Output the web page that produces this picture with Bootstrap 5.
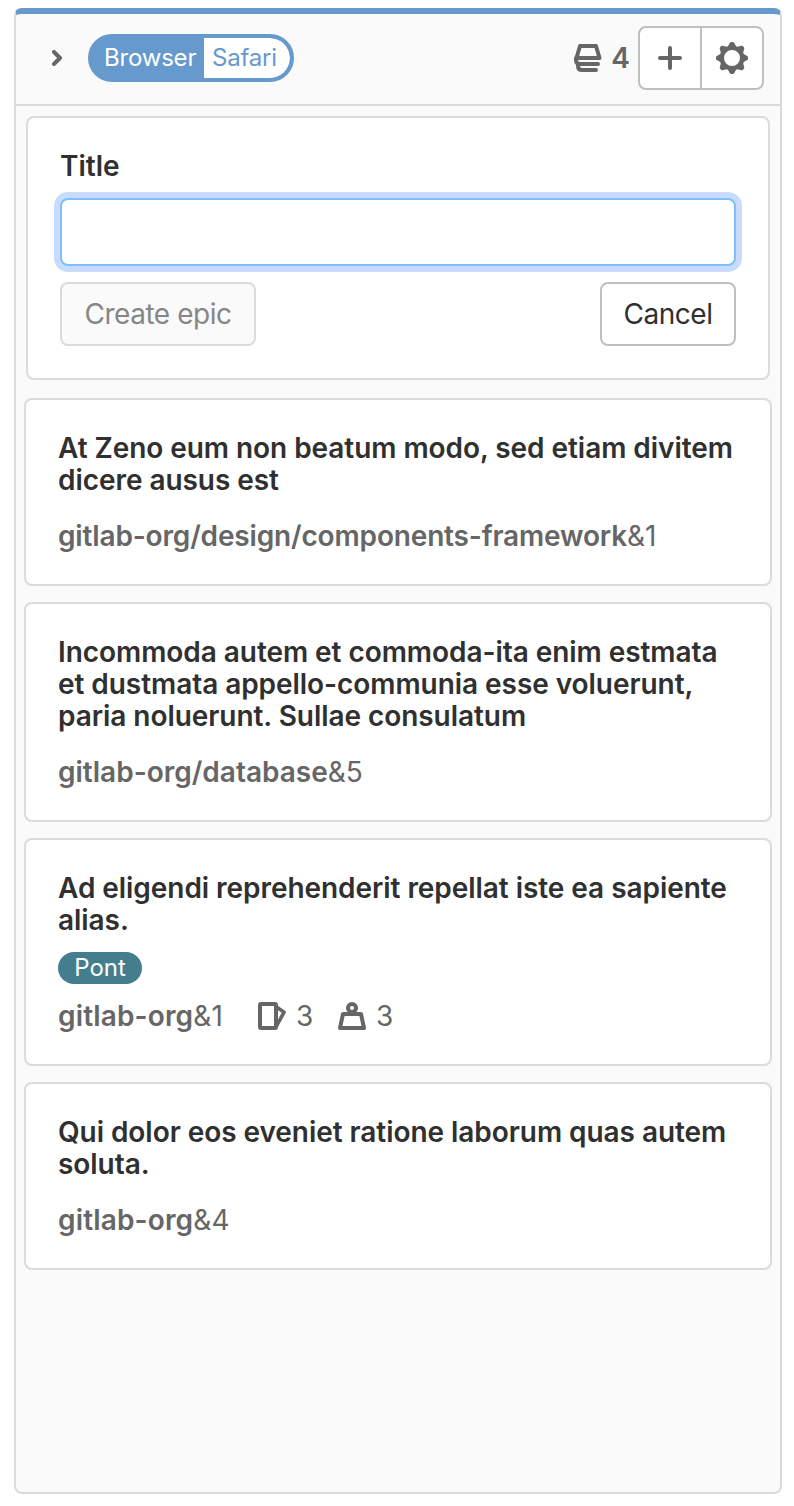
<!DOCTYPE html>
<html lang="en">
<head>
<meta charset="utf-8">
<meta name="viewport" content="width=device-width, initial-scale=1">
<title>Epic board</title>
<link href="https://cdn.jsdelivr.net/npm/bootstrap@5.3.0/dist/css/bootstrap.min.css" rel="stylesheet">
<style>
  body { font-family: Inter, "Liberation Sans", sans-serif; font-size: 28px; line-height: 32px; color: #303030; background: #fff; height: 1506px; overflow: hidden; }
  .board-list { margin: 8px 12px 0 14px; height: 1486px; background: #fafafa; border: 2px solid #dbdbdb; border-top: 6px solid #69c; border-radius: 8px; }
  .list-head { height: 92px; padding: 12px 16px 14px 36px; border-bottom: 2px solid #dbdbdb; }
  .scoped { height: 48px; margin-left: 26px; background: #69c; border: 4px solid #69c; border-radius: 24px; font-size: 24px; line-height: 40px; letter-spacing: -.2px; overflow: hidden; }
  .scoped-key { width: 112px; padding-left: 12px; color: #fff; }
  .scoped-value { width: 86px; padding-left: 8px; color: #69c; background: #fff; border-radius: 0 20px 20px 0; }
  .muted-ink { color: #666; }
  .semi { font-weight: 600; }
  .count { margin: 0 8px 0 9px; }
  .tool-btn { height: 64px; padding: 0; background: #fff; border: 2px solid #bfbfbf; }
  .tool-group .tool-btn { flex: none; }
  .tool-group .tool-btn:first-child { width: 64px; border-radius: 8px 0 0 8px; }
  .tool-group .tool-btn:last-child { width: 64px; margin-left: -2px; border-radius: 0 8px 8px 0; }
  .epic-card, .form-box { background: #fff; border: 2px solid #dbdbdb; border-radius: 8px; }
  .form-box { margin: 10px 10px 18px; height: 264px; padding: 32px; }
  .epic-card { margin: 0 8px 16px; padding: 32px 0 32px 32px; }
  .epic-title { font-weight: 600; letter-spacing: -.055px; }
  .title-field { height: 68px; border: 2px solid #80bdff; border-radius: 8px; }
  .title-field, .title-field:focus { border-color: #80bdff; box-shadow: 0 0 0 6px #c8dcff; }
  .form-btn { height: 64px; font-size: 28px; line-height: 32px; letter-spacing: -.45px; padding: 0; border: 2px solid #bfbfbf; border-radius: 8px; background: #fff; color: #303030; }
  .form-btn:disabled { background: #fafafa; border-color: #dbdbdb; color: #868686; opacity: 1; }
  .w-create { width: 196px; } .w-cancel { width: 136px; }
  .label-pill { width: 84px; height: 32px; margin-top: 16px; border-radius: 16px; background: #447d8e; color: #fff; font-size: 24px; line-height: 32px; text-align: center; }
  .epic-ref { margin-top: 24px; }
  .ref-short { letter-spacing: .15px; }
  .ref-long { letter-spacing: -.16px; }
  .ref-slot { width: 200px; }
  .stat { padding-left: 10px; }
  .stat-slot { width: 52px; }
  .label-pill + .epic-ref { margin-top: 16px; }
  svg { display: block; flex: none; }
</style>
</head>
<body>
<main class="board-list">
  <header class="list-head d-flex align-items-center">
    <svg width="10" height="16" viewBox="0 0 10 16" fill="none" stroke="#666" stroke-width="4" stroke-linecap="round" stroke-linejoin="round"><path d="M2 2l6 6-6 6"/></svg>
    <div class="scoped d-flex"><span class="scoped-key">Browser</span><span class="scoped-value">Safari</span></div>
    <div class="d-flex align-items-center ms-auto muted-ink">
      <svg width="28" height="28" viewBox="0 0 28 28" fill="none" stroke="#666" stroke-width="4" stroke-linecap="round" stroke-linejoin="round"><path d="M6 2h16l3.5 12H2.5zM2 14v2q0 4 4 4h18M4 20v2q0 4 4 4h14"/></svg>
      <span class="semi count">4</span>
      <div class="tool-group d-flex">
        <button class="btn tool-btn d-flex align-items-center justify-content-center" aria-label="New epic"><svg width="24" height="24" viewBox="0 0 24 24" stroke="#666" stroke-width="4" stroke-linecap="round"><path d="M12 2v20M2 12h20"/></svg></button>
        <button class="btn tool-btn d-flex align-items-center justify-content-center" aria-label="Settings"><svg width="32" height="32" viewBox="-16 -16 32 32"><circle r="10.2" fill="none" stroke="#666" stroke-width="4.4"/><g fill="#666" stroke="#666" stroke-width="3" stroke-linejoin="round"><path d="M-2.8-11L-.8-14.5H.8L2.8-11Z"/><path transform="rotate(45)" d="M-2.8-11L-.8-14.5H.8L2.8-11Z"/><path transform="rotate(90)" d="M-2.8-11L-.8-14.5H.8L2.8-11Z"/><path transform="rotate(135)" d="M-2.8-11L-.8-14.5H.8L2.8-11Z"/><path transform="rotate(180)" d="M-2.8-11L-.8-14.5H.8L2.8-11Z"/><path transform="rotate(225)" d="M-2.8-11L-.8-14.5H.8L2.8-11Z"/><path transform="rotate(270)" d="M-2.8-11L-.8-14.5H.8L2.8-11Z"/><path transform="rotate(315)" d="M-2.8-11L-.8-14.5H.8L2.8-11Z"/></g></svg></button>
      </div>
    </div>
  </header>
  <form class="form-box">
    <label for="title" class="semi d-block">Title</label>
    <input id="title" type="text" class="form-control title-field mt-3">
    <div class="d-flex justify-content-between mt-3">
      <button type="button" class="btn form-btn w-create" disabled>Create epic</button>
      <button type="button" class="btn form-btn w-cancel">Cancel</button>
    </div>
  </form>
  <article class="epic-card">
    <div class="epic-title">At Zeno eum non beatum modo, sed etiam divitem<br>dicere ausus est</div>
    <div class="epic-ref ref-long muted-ink"><span class="semi">gitlab-org/design/components-framework</span>&amp;1</div>
  </article>
  <article class="epic-card">
    <div class="epic-title">Incommoda autem et commoda-ita enim estmata<br>et dustmata appello-communia esse voluerunt,<br>paria noluerunt. Sullae consulatum</div>
    <div class="epic-ref muted-ink"><span class="semi">gitlab-org/database</span>&amp;5</div>
  </article>
  <article class="epic-card">
    <div class="epic-title">Ad eligendi reprehenderit repellat iste ea sapiente<br>alias.</div>
    <div class="label-pill">Pont</div>
    <div class="epic-ref muted-ink d-flex align-items-center"><span class="ref-slot ref-short"><span class="semi">gitlab-org</span>&amp;1</span>
      <svg width="28" height="28" viewBox="0 0 28 28" fill="none" stroke="#666" stroke-width="4" stroke-linejoin="round"><rect x="2" y="2" width="16" height="24" rx="1"/><path stroke-width="3.6" d="M18.5 5l7.6 5.2L18.5 24"/></svg>
      <span class="stat stat-slot">3</span>
      <svg width="28" height="28" viewBox="0 0 28 28" fill="none" stroke="#666" stroke-width="4" stroke-linejoin="round"><circle cx="14" cy="6" r="4"/><path d="M5 12h18l3 14H2z"/></svg>
      <span class="stat">3</span>
    </div>
  </article>
  <article class="epic-card">
    <div class="epic-title">Qui dolor eos eveniet ratione laborum quas autem<br>soluta.</div>
    <div class="epic-ref ref-short muted-ink"><span class="semi">gitlab-org</span>&amp;4</div>
  </article>
</main>
<script src="https://cdn.jsdelivr.net/npm/bootstrap@5.3.0/dist/js/bootstrap.bundle.min.js"></script>
</body>
</html>
